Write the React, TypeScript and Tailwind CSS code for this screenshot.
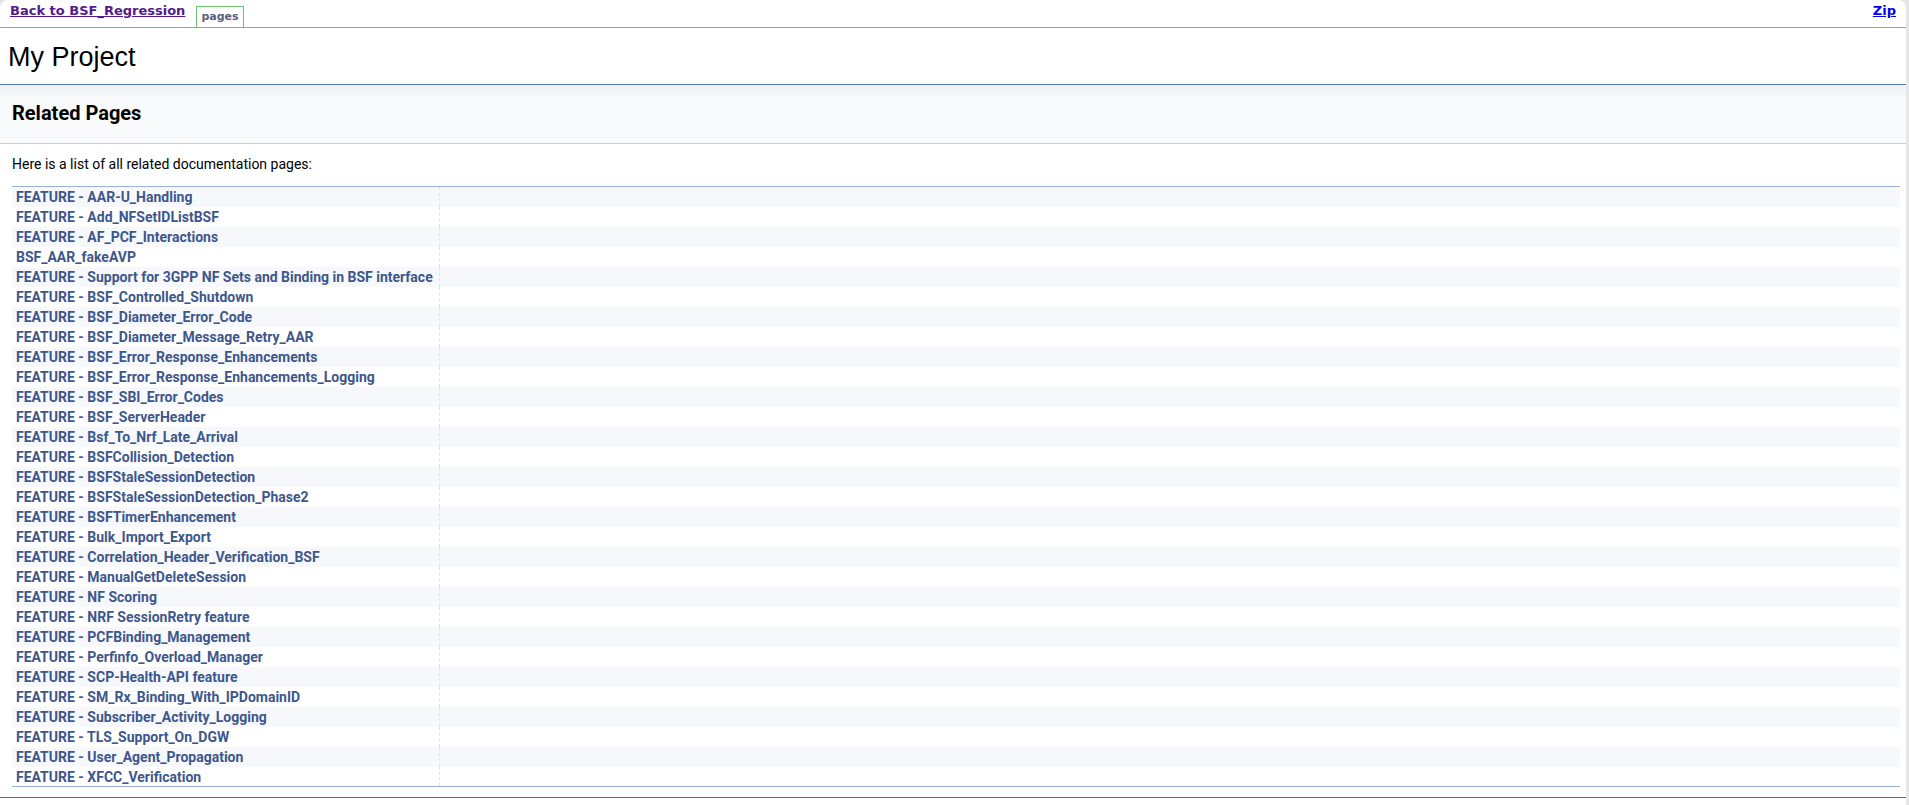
const pages = [
  'FEATURE - AAR-U_Handling',
  'FEATURE - Add_NFSetIDListBSF',
  'FEATURE - AF_PCF_Interactions',
  'BSF_AAR_fakeAVP',
  'FEATURE - Support for 3GPP NF Sets and Binding in BSF interface',
  'FEATURE - BSF_Controlled_Shutdown',
  'FEATURE - BSF_Diameter_Error_Code',
  'FEATURE - BSF_Diameter_Message_Retry_AAR',
  'FEATURE - BSF_Error_Response_Enhancements',
  'FEATURE - BSF_Error_Response_Enhancements_Logging',
  'FEATURE - BSF_SBI_Error_Codes',
  'FEATURE - BSF_ServerHeader',
  'FEATURE - Bsf_To_Nrf_Late_Arrival',
  'FEATURE - BSFCollision_Detection',
  'FEATURE - BSFStaleSessionDetection',
  'FEATURE - BSFStaleSessionDetection_Phase2',
  'FEATURE - BSFTimerEnhancement',
  'FEATURE - Bulk_Import_Export',
  'FEATURE - Correlation_Header_Verification_BSF',
  'FEATURE - ManualGetDeleteSession',
  'FEATURE - NF Scoring',
  'FEATURE - NRF SessionRetry feature',
  'FEATURE - PCFBinding_Management',
  'FEATURE - Perfinfo_Overload_Manager',
  'FEATURE - SCP-Health-API feature',
  'FEATURE - SM_Rx_Binding_With_IPDomainID',
  'FEATURE - Subscriber_Activity_Logging',
  'FEATURE - TLS_Support_On_DGW',
  'FEATURE - User_Agent_Propagation',
  'FEATURE - XFCC_Verification',
];

export default function App() {
  return (
    <div className="min-h-screen bg-[#e6e6e6]">
      <div className="w-[1906px] min-h-[805px] bg-white rounded-t-[8px] overflow-hidden">
        {/* Top nav bar */}
        <div className="flex h-[28px] border-b border-[#6cc36c] pl-[10px] pr-[10px] font-['DejaVu_Sans',sans-serif]">
          <a href="#" className="mt-[3px] text-[13px] leading-[16px] font-bold text-[#551a8b] underline">
            Back to BSF_Regression
          </a>
          <span className="ml-[11px] mt-[6px] h-[22px] border border-b-0 border-[#6cc36c] px-[4px] pt-[2px] text-[11px] leading-[16px] font-bold text-[#5a6080]">
            pages
          </span>
          <a href="#" className="ml-auto mt-[3px] text-[13px] leading-[16px] font-bold text-[#0000ee] underline">
            Zip
          </a>
        </div>

        {/* Project title */}
        <div className="h-[57px] border-b border-[#5373b4] pl-[8px] pt-[13px]">
          <div className="font-['Liberation_Sans',Arial,sans-serif] text-[27px] leading-[32px] text-black">
            My Project
          </div>
        </div>

        {/* Header */}
        <div className="h-[59px] border-b border-[#c4cfe5] bg-gradient-to-b from-[#eef1f7] to-[#f9fafc] to-[25%] pl-[12px] pt-[14px]">
          <div className="font-['Roboto',sans-serif] text-[20px] leading-[28px] font-bold text-black">
            Related Pages
          </div>
        </div>

        {/* Contents */}
        <div className="pl-[12px] pr-[6px] font-['Roboto',sans-serif]">
          <p className="mt-[9px] text-[14px] leading-[22px] text-black">
            Here is a list of all related documentation pages:
          </p>
          <table className="mt-[11px] w-full border-collapse border-y border-[#9cafd4] text-[14px] leading-[17px]">
            <tbody>
              {pages.map((p, i) => (
                <tr key={p} className={i % 2 === 0 ? 'bg-[#f7f8fb]' : 'bg-white'}>
                  <td className="h-[20px] whitespace-nowrap border-r border-dashed border-[#e2e2e2] p-0 pl-[4px] pr-[6px] pt-[2px] align-top">
                    <a href="#" className="font-bold text-[#3d578c]">
                      {p}
                    </a>
                  </td>
                  <td className="h-[20px] w-full p-0" />
                </tr>
              ))}
            </tbody>
          </table>
        </div>

        {/* Footer rule */}
        <div className="mt-[10px] border-t border-[#4a6aaa]" />
      </div>
    </div>
  );
}
